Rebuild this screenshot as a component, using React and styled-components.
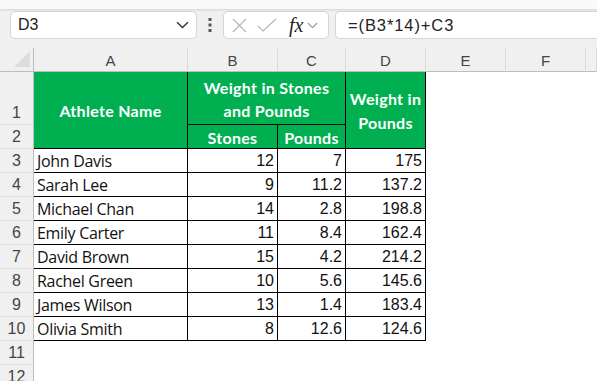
import React from "react";
import styled, { createGlobalStyle } from "styled-components";

const Global = createGlobalStyle`
  html, body { margin: 0; padding: 0; background: #ffffff; }
  body { font-family: "Liberation Sans", Arial, sans-serif; overflow: hidden; }
  * { box-sizing: border-box; }
`;

const Page = styled.div`
  width: 597px;
  height: 381px;
  overflow: hidden;
  background: #ffffff;
  display: flex;
  flex-direction: column;
  & > * { flex-shrink: 0; }
`;

const TopStrip = styled.div`
  height: 9px;
  background: #f9f9f9;
  box-shadow: 0 1px 2px rgba(0,0,0,0.12);
  position: relative;
  z-index: 1;
`;

const FormulaBar = styled.div`
  height: 39px;
  background: #f0f0f0;
  display: flex;
  align-items: flex-start;
  padding: 2px 0 0 10px;
`;

const NameBox = styled.div`
  width: 187px;
  height: 28px;
  background: #fff;
  border: 1px solid #d6d6d6;
  border-radius: 5px;
  display: flex;
  align-items: center;
  justify-content: space-between;
  padding: 0 7px 0 7px;
  font-size: 16px;
  color: #222;
`;

const Dots = styled.div`
  width: 26px;
  display: flex;
  justify-content: center;
  align-items: center;
  height: 28px;
`;

const FxBox = styled.div`
  width: 106px;
  height: 28px;
  background: #fff;
  border: 1px solid #d6d6d6;
  border-radius: 5px;
  display: flex;
  align-items: center;
  padding: 0 0 0 8px;
  gap: 10px;
`;

const Fx = styled.span`
  font-family: "Liberation Serif", "Times New Roman", serif;
  font-style: italic;
  font-size: 20px;
  color: #222;
  margin-left: 2px;
  margin-right: -6px;
`;

const FormulaInput = styled.div`
  flex: 1;
  margin-left: 6px;
  height: 28px;
  background: #fff;
  border: 1px solid #d6d6d6;
  border-right: none;
  border-radius: 5px 0 0 5px;
  display: flex;
  align-items: center;
  padding-left: 12px;
  font-size: 16.5px;
  color: #222;
  letter-spacing: 0.9px;
`;

const Grid = styled.div`
  display: grid;
  grid-template-columns: 34px 154px 90px 68px 80px 80px 80px 1fr;
  grid-template-rows: 24px 53px repeat(11, 24px);
  background: #fff;
`;

const Corner = styled.div`
  background: #f0f0f0;
  border-right: 1px solid #bdbdbd;
  border-bottom: 1px solid #bdbdbd;
  position: relative;
`;

const CornerTri = styled.div`
  position: absolute;
  right: 3px;
  bottom: 4px;
  width: 0;
  height: 0;
  border-left: 16px solid transparent;
  border-bottom: 16px solid #dcdcdc;
`;

const ColHead = styled.div`
  background: #f0f0f0;
  border-right: 1px solid #dadada;
  border-bottom: 1px solid #bdbdbd;
  display: flex;
  align-items: center;
  justify-content: center;
  font-size: 15px;
  color: #444;
  padding-top: 1px;
`;

const RowHead = styled.div`
  background: #f0f0f0;
  border-right: 1px solid #bdbdbd;
  border-bottom: 1px solid #dadada;
  display: flex;
  align-items: ${p => (p.$tall ? "flex-end" : "center")};
  justify-content: center;
  font-size: 16px;
  color: #444;
  padding-bottom: ${p => (p.$tall ? "2px" : "0")};
  grid-column: 1;
`;

const HeadCell = styled.div`
  grid-column: ${p => p.$col};
  grid-row: ${p => p.$row};
  background: #00b050;
  color: #fff;
  font-family: Lato, "Open Sans", sans-serif;
  font-weight: 700;
  font-size: 16px;
  letter-spacing: 0.3px;
  line-height: ${p => p.$lh || 23}px;
  text-align: center;
  display: flex;
  align-items: center;
  justify-content: center;
  border-right: 1px solid #000;
  border-bottom: 1px solid #000;
  padding-top: 1px;
`;

const Cell = styled.div`
  grid-column: ${p => p.$col};
  border-right: 1px solid #000;
  border-bottom: 1px solid #000;
  display: flex;
  align-items: center;
  justify-content: ${p => (p.$num ? "flex-end" : "flex-start")};
  padding: 1px 3px 0 3px;
  font-size: ${p => (p.$num ? "16px" : "16px")};
  color: #111;
  font-family: ${p => (p.$num ? '"Liberation Sans", Arial, sans-serif' : '"Open Sans", "Noto Sans", sans-serif')};
  letter-spacing: ${p => (p.$num ? "0" : "-0.3px")};
  white-space: nowrap;
`;

const Blank = styled.div`
  grid-column: ${p => p.$col};
`;

const ChevronDown = ({ size = 12, color = "#444" }) => (
  <svg width={size} height={size * 0.6} viewBox="0 0 12 7" fill="none">
    <path d="M1 1l5 5 5-5" stroke={color} strokeWidth="1.3" />
  </svg>
);

const data = [
  ["John Davis", 12, 7, 175],
  ["Sarah Lee", 9, 11.2, 137.2],
  ["Michael Chan", 14, 2.8, 198.8],
  ["Emily Carter", 11, 8.4, 162.4],
  ["David Brown", 15, 4.2, 214.2],
  ["Rachel Green", 10, 5.6, 145.6],
  ["James Wilson", 13, 1.4, 183.4],
  ["Olivia Smith", 8, 12.6, 124.6],
];

export default function App() {
  const cols = ["A", "B", "C", "D", "E", "F", ""];
  return (
    <Page>
      <Global />
      <TopStrip />
      <FormulaBar>
        <NameBox>
          <span>D3</span>
          <ChevronDown size={13} color="#333" />
        </NameBox>
        <Dots>
          <svg width="4" height="14" viewBox="0 0 4 14">
            <rect x="0.5" y="0" width="3" height="3" fill="#555" />
            <rect x="0.5" y="5.5" width="3" height="3" fill="#555" />
            <rect x="0.5" y="11" width="3" height="3" fill="#555" />
          </svg>
        </Dots>
        <FxBox>
          <svg width="15" height="15" viewBox="0 0 15 15">
            <path d="M1 1L14 14M14 1L1 14" stroke="#b5b5b5" strokeWidth="1.2" fill="none" />
          </svg>
          <svg width="20" height="15" viewBox="0 0 20 15">
            <path d="M1 8l5 5L19 1" stroke="#b5b5b5" strokeWidth="1.2" fill="none" />
          </svg>
          <Fx>fx</Fx>
          <ChevronDown size={11} color="#999" />
        </FxBox>
        <FormulaInput>=(B3*14)+C3</FormulaInput>
      </FormulaBar>
      <Grid>
        <Corner><CornerTri /></Corner>
        {cols.map((c, i) => (
          <ColHead key={i}>{c}</ColHead>
        ))}

        <RowHead $tall style={{ gridRow: 2 }}>1</RowHead>
        <HeadCell $col="2" $row="2 / span 2">Athlete Name</HeadCell>
        <HeadCell $col="3 / span 2" $row="2">Weight in Stones<br />and Pounds</HeadCell>
        <HeadCell $col="5" $row="2 / span 2" $lh={24}>Weight in<br />Pounds</HeadCell>
        <Blank $col="6 / span 3" style={{ gridRow: 2 }} />

        <RowHead style={{ gridRow: 3 }}>2</RowHead>
        <HeadCell $col="3" $row="3">Stones</HeadCell>
        <HeadCell $col="4" $row="3">Pounds</HeadCell>
        <Blank $col="6 / span 3" style={{ gridRow: 3 }} />

        {data.map((r, i) => (
          <React.Fragment key={i}>
            <RowHead>{i + 3}</RowHead>
            <Cell $col="2">{r[0]}</Cell>
            <Cell $col="3" $num>{r[1]}</Cell>
            <Cell $col="4" $num>{r[2]}</Cell>
            <Cell $col="5" $num>{r[3]}</Cell>
            <Blank $col="6 / span 3" />
          </React.Fragment>
        ))}
        <RowHead>11</RowHead>
        <Blank $col="2 / span 7" />
        <RowHead>12</RowHead>
        <Blank $col="2 / span 7" />
      </Grid>
    </Page>
  );
}
